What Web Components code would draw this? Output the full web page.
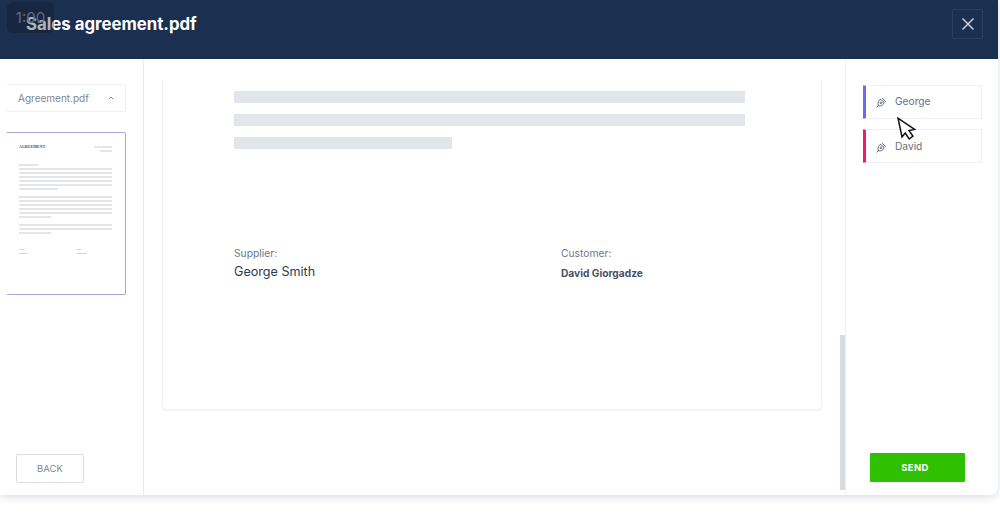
<!DOCTYPE html>
<html lang="en">
<head>
<meta charset="utf-8">
<title>Sales agreement.pdf</title>
<style>
    html, body { margin: 0; padding: 0; background: #fff; }
    body { width: 1000px; height: 515px; overflow: hidden; font-family: Inter, "Liberation Sans", sans-serif; }
</style>
</head>
<body>

<sign-dialog heading="Sales agreement.pdf">
    <file-sidebar slot="left" file="Agreement.pdf"></file-sidebar>
    <doc-viewer slot="center"></doc-viewer>
    <signer-panel slot="right">
        <signer-chip name="George" color="#6a6cf0"></signer-chip>
        <signer-chip name="David" color="#ee1d73"></signer-chip>
    </signer-panel>
</sign-dialog>

<script>
class SignDialog extends HTMLElement {
    constructor() {
        super();
        this.attachShadow({ mode: 'open' });
        this.shadowRoot.innerHTML = `
            <style>
                :host { display: block; position: relative; width: 998px; height: 495px; background: #fff; border-radius: 0 0 8px 0; box-shadow: 0 2px 8px rgba(30,45,70,.16); }
                .header { height: 59px; box-sizing: border-box; background: #1b3050; display: flex; align-items: center; justify-content: space-between; padding: 0 15px 11px 26px; color: #fff; font-size: 16.8px; font-weight: 700; }
                .close { width: 31px; height: 30px; box-sizing: border-box; border: 1px solid #2b4060; border-radius: 2px; background: none; padding: 0; display: flex; align-items: center; justify-content: center; }
                .body { display: grid; grid-template-columns: 144px 701px 153px; height: 436px; }
                .timer { position: absolute; left: 7px; top: 2px; width: 47px; height: 31px; border-radius: 6px; background: rgba(14,22,35,.32); color: #5d6d83; font-size: 15px; line-height: 31px; text-align: center; }
                .cursor { position: absolute; left: 897px; top: 117px; }
            </style>
            <div class="header">
                <span id="title"></span>
                <button class="close" aria-label="Close">
                    <svg width="12" height="12" viewBox="0 0 12 12"><path d="M.5.5l11 11M11.5.5l-11 11" stroke="#d5dbe3" stroke-width="1.4" fill="none"/></svg>
                </button>
            </div>
            <div class="timer">1:00</div>
            <div class="body">
                <slot name="left"></slot>
                <slot name="center"></slot>
                <slot name="right"></slot>
            </div>
            <svg class="cursor" width="20" height="25" viewBox="0 0 20 25">
                <path d="M1 1.2L5 20l3.2-4 4 6 3.8-2.8-4-5.6 5.6-1.2z" fill="#fff" stroke="#111" stroke-width="1.5" stroke-linejoin="miter"/>
            </svg>
        `;
        this.shadowRoot.getElementById('title').textContent = this.getAttribute('heading');
    }
}

class FileSidebar extends HTMLElement {
    constructor() {
        super();
        this.attachShadow({ mode: 'open' });
        this.shadowRoot.innerHTML = `
            <style>
                :host { display: flex; flex-direction: column; box-sizing: border-box; height: 436px; border-right: 1px solid #e9ebf1; padding: 25px 17px 12px 7px; }
                .select { height: 28px; box-sizing: border-box; border: 1px solid #eef0f4; border-left: 0; border-radius: 0 2px 2px 0; display: flex; align-items: center; justify-content: space-between; padding: 0 11px; color: #7d8797; font-size: 10px; }
                .thumb { margin-top: 20px; height: 163px; box-sizing: border-box; border: 1px solid #a8a5dc; border-left: 0; border-radius: 0 2px 2px 0; padding: 12px 13px 0 12px; display: flex; flex-direction: column; }
                .top { display: flex; justify-content: space-between; }
                .h { font: 700 3.9px "Liberation Serif", serif; color: #3a465a; letter-spacing: .1px; }
                .right { display: flex; flex-direction: column; align-items: flex-end; gap: 2px; margin-top: 1px; }
                .l { height: 2px; background: #e3e5ea; flex: none; }
                .stack { display: flex; flex-direction: column; gap: 2px; }
                .back { margin-top: auto; margin-left: 9px; width: 68px; height: 29px; box-sizing: border-box; border: 1px solid #dcdee4; border-radius: 2px; background: #fff; color: #7d8797; font: 400 9.5px Inter, sans-serif; padding: 0; }
                .sign { display: flex; width: 68px; justify-content: space-between; margin-top: 15px; }
                .sign .stack { width: 10px; gap: 3px; }
                .sign .l { background: #d3d6dc; height: 1px; }
            </style>
            <div class="select"><span id="file"></span>
                <svg width="6" height="4" viewBox="0 0 6 4"><path d="M.8 3.2L3 1l2.2 2.2" stroke="#7d8797" stroke-width="1" fill="none"/></svg>
            </div>
            <div class="thumb">
                <div class="top"><span class="h">AGREEMENT</span><div class="right"><div class="l" style="width:18px"></div><div class="l" style="width:12px"></div></div></div>
                <div class="stack" style="margin-top:12px">
                    <div class="l" style="width:19px"></div><div class="l" style="width:93px"></div><div class="l" style="width:93px"></div><div class="l" style="width:93px"></div><div class="l" style="width:93px"></div><div class="l" style="width:93px"></div><div class="l" style="width:39px"></div>
                </div>
                <div class="stack" style="margin-top:6px">
                    <div class="l" style="width:93px"></div><div class="l" style="width:93px"></div><div class="l" style="width:93px"></div><div class="l" style="width:93px"></div><div class="l" style="width:93px"></div><div class="l" style="width:32px"></div>
                </div>
                <div class="stack" style="margin-top:6px">
                    <div class="l" style="width:93px"></div><div class="l" style="width:93px"></div><div class="l" style="width:32px"></div>
                </div>
                <div class="sign">
                    <div class="stack"><div class="l" style="width:5px"></div><div class="l" style="width:8px"></div></div>
                    <div class="stack"><div class="l" style="width:4px"></div><div class="l" style="width:10px"></div></div>
                </div>
            </div>
            <button class="back">BACK</button>
        `;
        this.shadowRoot.getElementById('file').textContent = this.getAttribute('file');
    }
}

class DocViewer extends HTMLElement {
    constructor() {
        super();
        this.attachShadow({ mode: 'open' });
        this.shadowRoot.innerHTML = `
            <style>
                :host { display: block; position: relative; height: 436px; box-sizing: border-box; padding: 21px 23px 0 18px; }
                .page { height: 330px; box-sizing: border-box; border: 1px solid #f0f1f4; border-top: 0; border-radius: 0 0 4px 4px; box-shadow: 0 1px 2px rgba(30,45,70,.05); padding: 11px 76px 0 71px; display: flex; flex-direction: column; gap: 11px; }
                .bar { height: 12px; background: #e2e5ea; }
                .sigs { display: flex; margin-top: 87px; color: #2b3a52; }
                .sig { display: flex; flex-direction: column; }
                .sig.a { width: 327px; }
                .label { font-size: 10.3px; line-height: 13px; color: #6e7888; }
                .name { font-size: 12.6px; line-height: 16px; margin-top: 4px; }
                .name.b { font-size: 10.2px; font-weight: 700; color: #465266; margin-top: 5px; }
                .track { position: absolute; right: 0; bottom: 5px; width: 5px; height: 155px; background: #d5dbe3; }
            </style>
            <div class="page">
                <div class="bar"></div>
                <div class="bar"></div>
                <div class="bar" style="width:218px"></div>
                <div class="sigs">
                    <div class="sig a"><span class="label">Supplier:</span><span class="name">George Smith</span></div>
                    <div class="sig"><span class="label">Customer:</span><span class="name b">David Giorgadze</span></div>
                </div>
            </div>
            <div class="track"></div>
        `;
    }
}

class SignerPanel extends HTMLElement {
    constructor() {
        super();
        this.attachShadow({ mode: 'open' });
        this.shadowRoot.innerHTML = `
            <style>
                :host { display: flex; flex-direction: column; box-sizing: border-box; height: 436px; border-left: 1px solid #eef0f4; padding: 26px 16px 13px 17px; }
                .list { display: flex; flex-direction: column; gap: 10px; }
                .send { margin-top: auto; margin-left: 7px; width: 95px; height: 29px; border: 0; border-radius: 1px; background: #2fc100; color: #fff; font: 700 9.5px Inter, sans-serif; letter-spacing: .4px; padding: 0 5px 0 0; }
            </style>
            <div class="list"><slot></slot></div>
            <button class="send">SEND</button>
        `;
    }
}

class SignerChip extends HTMLElement {
    constructor() {
        super();
        this.attachShadow({ mode: 'open' });
        this.shadowRoot.innerHTML = `
            <style>
                :host { display: flex; align-items: center; box-sizing: border-box; height: 34px; width: 119px; border: 1px solid #eceef3; border-left: 3px solid var(--c); border-radius: 1px; padding: 0 0 2px 10px; color: #667183; font-size: 10.2px; }
                :host(:last-child) { padding-bottom: 0; }
                svg { margin-right: 8px; margin-top: 2px; }
            </style>
            <svg width="11" height="11" viewBox="0 0 11 11" fill="none" stroke="#5f6a7c" stroke-width="1">
                <path d="M.6 10.4L3 8M2.2 8.8C1.4 6 2.6 2.6 5 2.4c.6 1 1.6 2 3 2.6C8.2 7.6 5.4 9.4 2.2 8.8z"/><path d="M6 1.2l4 3.6"/><circle cx="5" cy="5.8" r=".9"/>
            </svg>
            <span id="n"></span>
        `;
        this.style.setProperty('--c', this.getAttribute('color'));
        this.shadowRoot.getElementById('n').textContent = this.getAttribute('name');
    }
}

customElements.define('sign-dialog', SignDialog);
customElements.define('file-sidebar', FileSidebar);
customElements.define('doc-viewer', DocViewer);
customElements.define('signer-panel', SignerPanel);
customElements.define('signer-chip', SignerChip);
</script>
</body>
</html>
